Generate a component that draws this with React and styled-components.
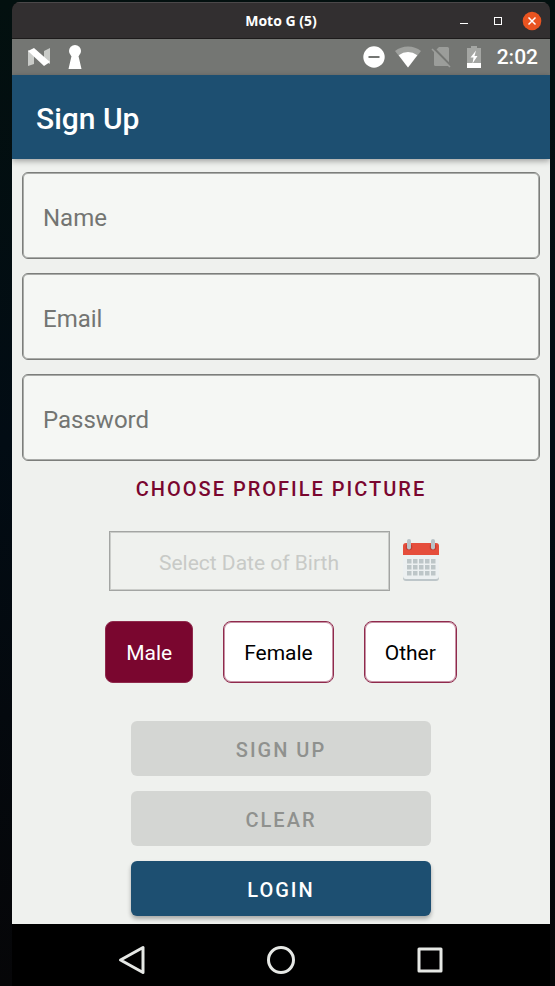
import React, { useState } from "react";
import styled, { createGlobalStyle, css } from "styled-components";

const color = {
  blue: "#1d4f71",
  wine: "#7a062f",
  page: "#eff1ee",
  field: "#f5f7f4",
  outline: "#737572",
};

const GlobalStyle = createGlobalStyle`
  *, *::before, *::after { box-sizing: border-box; }
  body {
    margin: 0;
    background: linear-gradient(#03100f, #020c14 45%, #060608);
    font-family: Roboto, "Liberation Sans", sans-serif;
  }
  button, input { font: inherit; }
`;

const Desktop = styled.div`
  min-height: 100vh;
  display: flex;
  padding: 2px 5px 0 12px;
`;

const Window = styled.div`
  flex: 1;
  min-width: 0;
  display: flex;
  flex-direction: column;
  border-radius: 8px 8px 0 0;
  overflow: hidden;
  background: #000;
`;

const TitleBar = styled.div`
  height: 37px;
  display: grid;
  grid-template-columns: 1fr auto 1fr;
  align-items: center;
  background: #322f30;
  border-top: 1px solid #4b4849;
  border-bottom: 1px solid #1d1b1b;
`;

const WindowTitle = styled.div`
  grid-column: 2;
  color: #fff;
  font: 700 14px/18px "Open Sans", "Noto Sans", sans-serif;
`;

const WindowControls = styled.div`
  display: flex;
  justify-content: flex-end;
  align-items: center;
  gap: 14px;
  padding-right: 8px;
`;

const IconButton = styled.button`
  display: flex;
  padding: 0;
  border: 0;
  background: none;
  cursor: pointer;
`;

const StatusBar = styled.div`
  height: 36px;
  display: flex;
  align-items: center;
  justify-content: space-between;
  padding: 0 12px 0 16px;
  background: #747673;
`;

const StatusGroup = styled.div`
  display: flex;
  align-items: center;
  gap: ${(p) => p.$gap}px;
`;

const Clock = styled.time`
  color: #fff;
  font-size: 21px;
  font-weight: 500;
  line-height: 24px;
`;

const AppBar = styled.header`
  height: 84px;
  display: flex;
  align-items: center;
  padding: 4px 24px 0;
  background: ${color.blue};
  box-shadow: 0 2px 6px rgba(0, 0, 0, 0.35);
  z-index: 1;
`;

const Heading = styled.h1`
  margin: 0;
  color: #fff;
  font-size: 30px;
  font-weight: 500;
  line-height: 36px;
`;

const Form = styled.form`
  flex: 1;
  display: flex;
  flex-direction: column;
  align-items: center;
  padding: 13px 10px 7px;
  background: ${color.page};
`;

const Fields = styled.div`
  align-self: stretch;
  display: flex;
  flex-direction: column;
  gap: 14px;
`;

const TextField = styled.input`
  width: 100%;
  height: 87px;
  padding: 4px 20px 0;
  border: 1px solid #7c7e7b;
  border-radius: 6px;
  background: ${color.field};
  box-shadow: inset 0 0 0 1px #a9aba8;
  color: #222;
  font-size: 24px;
  outline-color: ${color.wine};
  &::placeholder { color: ${color.outline}; opacity: 1; }
`;

const PictureButton = styled.button`
  margin-top: 4px;
  height: 48px;
  border: 0;
  background: none;
  color: ${color.wine};
  font-size: 20px;
  font-weight: 500;
  letter-spacing: 2px;
  text-transform: uppercase;
  cursor: pointer;
`;

const DateRow = styled.div`
  display: flex;
  align-items: center;
  margin-top: 18px;
`;

const DateField = styled.input`
  width: 281px;
  height: 60px;
  padding: 3px 0 0;
  border: 1px solid #a3a5a3;
  background: none;
  box-shadow: inset 0 0 0 1px #cbcdca;
  color: #222;
  font-size: 21px;
  text-align: center;
  &::placeholder { color: #c8cac7; opacity: 1; }
`;

const CalendarButton = styled(IconButton)`
  padding: 0 14px 2px 12px;
`;

const GenderGroup = styled.fieldset`
  display: flex;
  gap: 30px;
  margin: 30px 0 0;
  padding: 0;
  border: 0;
`;

const GenderInput = styled.input`
  appearance: none;
  position: absolute;
  inset: 0;
  margin: 0;
  cursor: pointer;
`;

const GenderOption = styled.label`
  position: relative;
  height: 62px;
  display: flex;
  align-items: center;
  padding: 2px 20px 0;
  border: 1px solid #8f2a4c;
  border-radius: 8px;
  font-size: 21px;
  line-height: 24px;
  ${(p) =>
    p.$selected
      ? css`background: ${color.wine}; color: #fff;`
      : css`background: #fff; color: #000; box-shadow: inset 0 0 0 1px #c792a5;`}
`;

const Actions = styled.div`
  width: 300px;
  display: flex;
  flex-direction: column;
  gap: 15px;
  margin-top: 38px;
`;

const ActionButton = styled.button`
  height: 55px;
  padding: 2px 0 0;
  border: 0;
  border-radius: 6px;
  background: ${color.blue};
  color: #fff;
  font-size: 20px;
  font-weight: 500;
  letter-spacing: 2px;
  text-transform: uppercase;
  box-shadow: 0 3px 4px rgba(0, 0, 0, 0.3);
  cursor: pointer;
  &:disabled {
    background: #d4d6d3;
    color: #8f918e;
    box-shadow: none;
    cursor: default;
  }
`;

const NavBar = styled.nav`
  height: 62px;
  display: flex;
  justify-content: center;
  align-items: center;
  gap: 119px;
  padding-top: 10px;
  background: #000;
`;

const NougatIcon = () => (
  <svg width="22" height="19" viewBox="0 0 22 19">
    <path d="M0 2v16l6-2V6z" fill="#c9cbc8" />
    <path d="M22 0v16l-6-3V3z" fill="#c9cbc8" />
    <path d="M0 3l6-3 16 14-6 4z" fill="#fff" />
  </svg>
);

const KeyholeIcon = () => (
  <svg width="14" height="24" viewBox="0 0 14 24">
    <circle cx="7" cy="6" r="6" fill="#fff" />
    <path d="M3 8h8l-.5 3L13.500 24H.5l3-13z" fill="#fff" />
  </svg>
);

const DoNotDisturbIcon = () => (
  <svg width="22" height="22" viewBox="0 0 22 22">
    <circle cx="11" cy="11" r="10.700" fill="#fff" />
    <path d="M5.500 11h11" stroke="#747673" strokeWidth="2.200" />
  </svg>
);

const WifiIcon = () => (
  <svg width="26" height="22" viewBox="0 0 26 22">
    <path d="M13 21.500L0 5Q5.500 .5 13 .5T26 5z" fill="#9fa19e" />
    <path d="M13 21.500L3.700 9.300Q8 6 13 6t9.300 3.300z" fill="#fff" />
  </svg>
);

const NoSimIcon = () => (
  <svg width="20" height="22" viewBox="0 0 20 22">
    <path d="M8 1h8.500q1.500 0 1.500 1.500V20H4.500Q3 20 3 18.500V6z" fill="#9b9d9a" />
    <path d="M2 1.500L20 20" stroke="#747673" strokeWidth="2.500" />
    <path d="M1 3l18 18" stroke="#9b9d9a" strokeWidth="1.600" />
  </svg>
);

const BatteryIcon = () => (
  <svg width="14" height="22" viewBox="0 0 14 22">
    <path d="M4 0h6v2h4v15H0V2h4z" fill="#a4a6a3" />
    <path d="M0 17h14v5H0z" fill="#fff" />
    <path d="M9 4.500L3.500 11.500h3L5.500 17.500l5-7.500h-3z" fill="#fff" />
  </svg>
);

const CalendarIcon = () => (
  <svg width="38" height="44" viewBox="0 0 38 44">
    <path d="M1 15h36v25q0 3-3 3H4q-3 0-3-3z" fill="#bdc6c9" />
    <path d="M1 15h36v23q0 3-3 3H4q-3 0-3-3z" fill="#ecf0f1" />
    <path d="M1 17V8q0-3 3-3h30q3 0 3 3v9z" fill="#e54e3c" />
    <circle cx="7" cy="9" r="3.300" fill="#c33d31" />
    <circle cx="31" cy="9" r="3.300" fill="#c33d31" />
    <rect x="5" y="1" width="4" height="10.500" rx="2" fill="#b9c3c7" />
    <rect x="29" y="1" width="4" height="10.500" rx="2" fill="#b9c3c7" />
    {[21, 27, 33].map((y) =>
      [5, 11, 17, 23, 29].map((x) => (
        <rect key={`${x}-${y}`} x={x} y={y} width="4.500" height="4.500" fill="#bdc6c8" />
      ))
    )}
  </svg>
);

const navStroke = { fill: "none", stroke: "#e6e8e5", strokeWidth: 3, strokeLinejoin: "round" };

const BackIcon = () => (
  <svg width="30" height="30" viewBox="0 0 30 30">
    <path d="M26 2.500v25L3.500 15z" {...navStroke} />
  </svg>
);

const HomeIcon = () => (
  <svg width="30" height="30" viewBox="0 0 30 30">
    <circle cx="15" cy="15" r="12.500" {...navStroke} />
  </svg>
);

const RecentsIcon = () => (
  <svg width="30" height="30" viewBox="0 0 30 30">
    <rect x="4" y="4" width="22" height="22" {...navStroke} />
  </svg>
);

const MinimizeIcon = () => (
  <svg width="20" height="20" viewBox="0 0 20 20">
    <path d="M6 12.500h8" stroke="#fff" />
  </svg>
);

const MaximizeIcon = () => (
  <svg width="20" height="20" viewBox="0 0 20 20">
    <rect x="6.500" y="6.500" width="7" height="7" fill="none" stroke="#fff" />
  </svg>
);

const CloseIcon = () => (
  <svg width="20" height="20" viewBox="0 0 20 20">
    <circle cx="10" cy="10" r="9.300" fill="#e95420" />
    <path d="M6.500 6.500l7 7M13.500 6.500l-7 7" stroke="#fff" strokeWidth="1.500" />
  </svg>
);

export default function App() {
  const [gender, setGender] = useState("Male");

  return (
    <Desktop>
      <GlobalStyle />
      <Window>
        <TitleBar>
          <WindowTitle>Moto G (5)</WindowTitle>
          <WindowControls>
            <IconButton type="button" aria-label="Minimize"><MinimizeIcon /></IconButton>
            <IconButton type="button" aria-label="Maximize"><MaximizeIcon /></IconButton>
            <IconButton type="button" aria-label="Close"><CloseIcon /></IconButton>
          </WindowControls>
        </TitleBar>
        <StatusBar>
          <StatusGroup $gap={18}>
            <NougatIcon />
            <KeyholeIcon />
          </StatusGroup>
          <StatusGroup $gap={16}>
            <StatusGroup $gap={10}>
              <DoNotDisturbIcon />
              <WifiIcon />
              <NoSimIcon />
            </StatusGroup>
            <BatteryIcon />
            <Clock>2:02</Clock>
          </StatusGroup>
        </StatusBar>
        <AppBar>
          <Heading>Sign Up</Heading>
        </AppBar>
        <Form onSubmit={(e) => e.preventDefault()}>
          <Fields>
            <TextField type="text" placeholder="Name" aria-label="Name" />
            <TextField type="email" placeholder="Email" aria-label="Email" />
            <TextField type="password" placeholder="Password" aria-label="Password" />
          </Fields>
          <PictureButton type="button">Choose profile picture</PictureButton>
          <DateRow>
            <DateField type="text" readOnly placeholder="Select Date of Birth" aria-label="Date of Birth" />
            <CalendarButton type="button" aria-label="Open calendar"><CalendarIcon /></CalendarButton>
          </DateRow>
          <GenderGroup aria-label="Gender">
            {["Male", "Female", "Other"].map((name) => (
              <GenderOption key={name} $selected={gender === name}>
                <GenderInput
                  type="radio"
                  name="gender"
                  value={name}
                  checked={gender === name}
                  onChange={() => setGender(name)}
                />
                {name}
              </GenderOption>
            ))}
          </GenderGroup>
          <Actions>
            <ActionButton type="submit" disabled>Sign up</ActionButton>
            <ActionButton type="reset" disabled>Clear</ActionButton>
            <ActionButton type="button">Login</ActionButton>
          </Actions>
        </Form>
        <NavBar aria-label="System navigation">
          <IconButton type="button" aria-label="Back"><BackIcon /></IconButton>
          <IconButton type="button" aria-label="Home"><HomeIcon /></IconButton>
          <IconButton type="button" aria-label="Recent apps"><RecentsIcon /></IconButton>
        </NavBar>
      </Window>
    </Desktop>
  );
}
